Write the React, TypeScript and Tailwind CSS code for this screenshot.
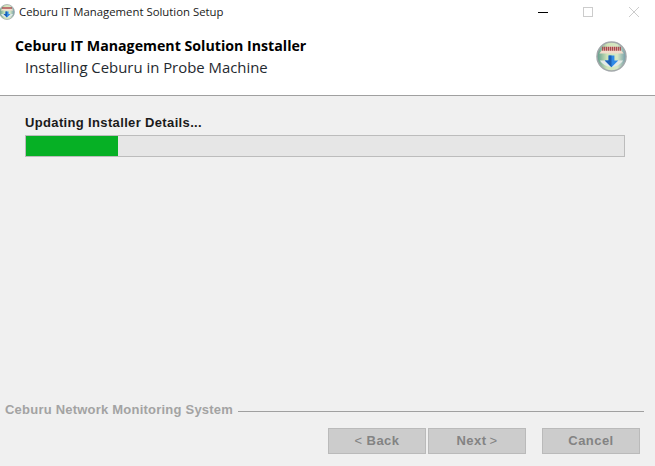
// Ceburu installer window
function AppIcon({ size }: { size: number }) {
  return (
    <svg width={size} height={size} viewBox="0 0 32 32" className="shrink-0 blur-[0.4px]">
      <defs>
        <linearGradient id="globe" x1="0" y1="0" x2="1" y2="0">
          <stop offset="0" stopColor="#5f9a8c" />
          <stop offset="0.35" stopColor="#cfe4b8" />
          <stop offset="0.7" stopColor="#d6e8c4" />
          <stop offset="1" stopColor="#6f9aa8" />
        </linearGradient>
      </defs>
      <circle cx="16" cy="16" r="15" fill="url(#globe)" stroke="#a3a8ab" strokeWidth="1.5" />
      <path d="M3.5 13 A14 14 0 0 1 28.5 13 Z" fill="#f2dccb" />
      <path d="M7 6 V10 M9 6 V10 M11 6 V10 M13 6 V10 M15 6 V10 M17 6 V10 M19 6 V10 M21 6 V10 M23 6 V10 M25 6 V10" stroke="#a8474c" strokeWidth="1.4" />
      <path d="M4 20 A14 14 0 0 0 28 20 Z" fill="#e3e9e6" />
      <path d="M13 15 H19 V20 H23 L16 27 L9 20 H13 Z" fill="#2f8ae6" />
      <path d="M16 27 L9 20 H13 V15 H16 Z" fill="#1c5fb4" />
    </svg>
  );
}

function WizardButton({ chevron, label }: { chevron?: "left" | "right"; label: string }) {
  return (
    <button className="w-[98px] h-[26px] bg-[#cccccc] border border-[#bababa] text-[#838383] text-[13px] font-bold tracking-[0.45px] font-['Liberation_Sans',sans-serif]">
      {chevron === "left" && <span className="font-normal text-[13px] mr-[4px]">&lt;</span>}
      {label}
      {chevron === "right" && <span className="font-normal text-[13px] ml-[3px]">&gt;</span>}
    </button>
  );
}

export default function App() {
  return (
    <div className="w-[655px] h-[466px] flex flex-col bg-[#f0f0f0] overflow-hidden">
      {/* Barra de titulo */}
      <div className="h-[24px] bg-white flex items-center shrink-0">
        <div className="-ml-[1px] mr-[4px]">
          <AppIcon size={16} />
        </div>
        <span className="text-[11.35px] text-[#1a1a1a] font-['Open_Sans',sans-serif] flex-1">
          Ceburu IT Management Solution Setup
        </span>
        <div className="flex items-center pr-[16px]">
          <div className="w-[10px] h-[1px] bg-black" />
          <div className="w-[10px] h-[10px] border border-[#cccccc] ml-[35px]" />
          <svg width="10" height="10" viewBox="0 0 10 10" className="ml-[36px]">
            <path d="M0 0 L10 10 M10 0 L0 10" stroke="#cccccc" strokeWidth="1" fill="none" />
          </svg>
        </div>
      </div>

      {/* Cabecera */}
      <div className="h-[72px] bg-white border-b border-[#a0a0a0] shrink-0 flex items-start justify-between pl-[15px] pr-[28px]">
        <div className="font-['Open_Sans',sans-serif] pt-[12px]">
          <div className="text-[14.2px] leading-[20px] font-bold text-black">Ceburu IT Management Solution Installer</div>
          <div className="text-[14.9px] leading-[22px] pl-[10px] text-[#1f2a30]">Installing Ceburu in Probe Machine</div>
        </div>
        <div className="pt-[17px]">
          <AppIcon size={31} />
        </div>
      </div>

      {/* Progreso */}
      <div className="flex-1 flex flex-col px-[25px] pt-[19px]">
        <div className="text-[13px] leading-[16px] font-bold tracking-[0.35px] text-[#1a1a1a] font-['Liberation_Sans',sans-serif] mb-[4px]">
          Updating Installer Details...
        </div>
        <div className="w-[600px] h-[22px] bg-[#e6e6e6] border border-[#bcbcbc] flex">
          <div className="w-[92px] bg-[#06b025]" />
        </div>
      </div>

      {/* Pie */}
      <div className="shrink-0 pl-[5px] pr-[11px] flex items-center gap-[5px]">
        <span className="text-[13px] leading-[16px] font-bold tracking-[0.22px] text-[#a3a3a3] font-['Liberation_Sans',sans-serif]">
          Ceburu Network Monitoring System
        </span>
        <div className="flex-1 h-[1px] bg-[#a0a0a0] mt-[3px]" />
      </div>
      <div className="shrink-0 flex justify-end pr-[15px] pt-[10px] pb-[12px]">
        <div className="flex gap-[2px] mr-[16px]">
          <WizardButton chevron="left" label="Back" />
          <WizardButton chevron="right" label="Next" />
        </div>
        <WizardButton label="Cancel" />
      </div>
    </div>
  );
}
